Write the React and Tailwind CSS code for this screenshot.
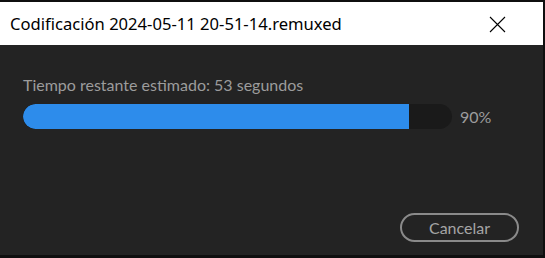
import React from "react";

const App = () => {
  const progress = 90;

  return (
    <div className="w-[545px] h-[258px] bg-[#0f0f0f] flex flex-col overflow-hidden">
      <div className="h-[2px] shrink-0" />
      <div className="flex w-[543px] flex-1 flex-col bg-[#232323]">
        {/* title bar */}
        <div className="flex h-[43px] shrink-0 items-center justify-between bg-white pl-[10px] pr-[37px] pt-[2px]">
          <span
            className="text-[16.6px] text-black"
            style={{ fontFamily: '"Noto Sans", "Open Sans", sans-serif' }}
          >
            Codificación 2024-05-11 20-51-14.remuxed
          </span>
          <svg width="17" height="17" viewBox="0 0 17 17" className="text-black">
            <path d="M1 1 L16 16 M16 1 L1 16" stroke="currentColor" strokeWidth="1.1" />
          </svg>
        </div>

        <div
          className="flex flex-1 flex-col px-[23px] pt-[30px]"
          style={{ fontFamily: "Lato, sans-serif" }}
        >
          <p className="text-[16px] leading-[20px] text-[#9c9c9c]">
            Tiempo restante estimado: 53 segundos
          </p>
          <div className="mt-[9px] flex items-center gap-[8px]">
            <div className="h-[25px] w-[429px] overflow-hidden rounded-full bg-[#1a1a1a]">
              <div
                className="h-full rounded-l-full bg-[#2d8ceb]"
                style={{ width: `${progress}%` }}
              />
            </div>
            <span className="text-[16px] text-[#9c9c9c]">{progress}%</span>
          </div>

          <div className="mt-auto mb-[13px] flex justify-end pr-[1px]">
            <button className="h-[29px] w-[119px] rounded-full border-2 border-[#8a8a8a] text-[16px] text-[#a5a5a5]">
              Cancelar
            </button>
          </div>
        </div>
      </div>
      <div className="h-[3px] shrink-0" />
    </div>
  );
};

export default App;
